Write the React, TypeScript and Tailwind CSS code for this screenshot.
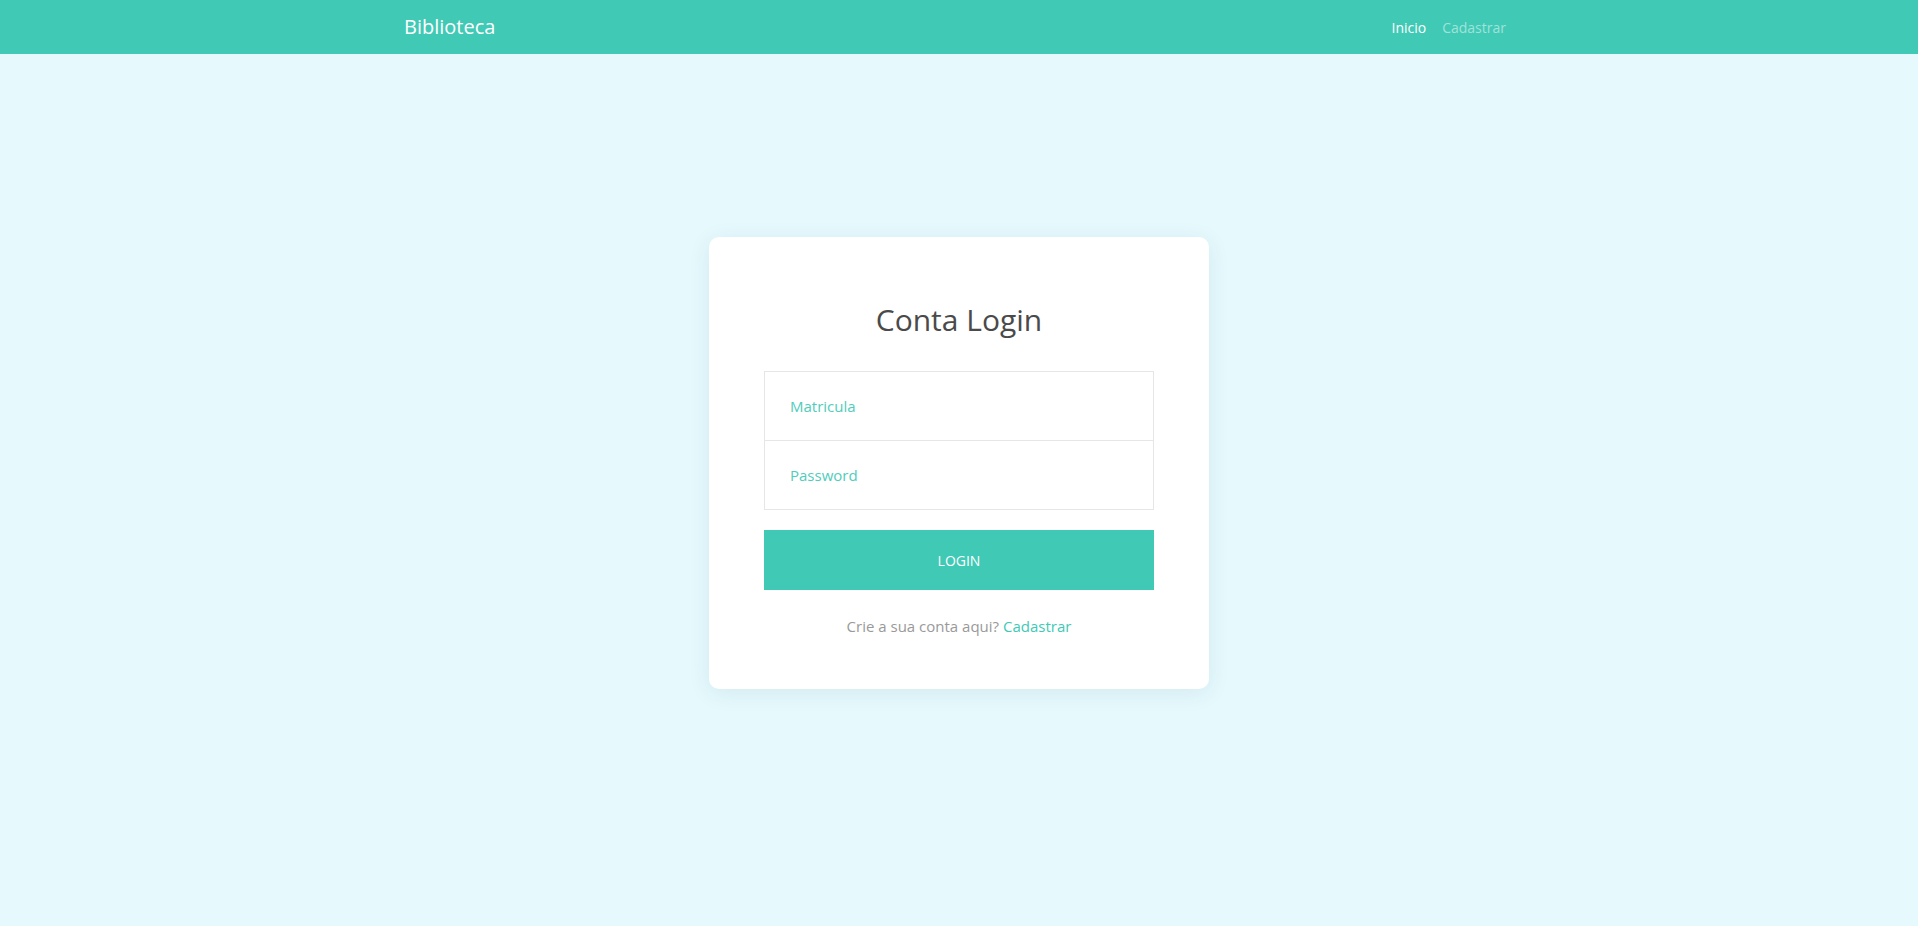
import React from "react";

export default function App() {
  return (
    <div
      className="min-h-[926px] w-full bg-[#e6f9fd]"
      style={{ fontFamily: '"Open Sans", "Noto Sans", sans-serif' }}
    >
      <nav className="h-[54px] bg-[#40c9b5]">
        <div className="mx-auto flex h-full w-[1110px] items-center justify-between">
          <a className="text-[20px] leading-[28px] text-white" href="#">
            Biblioteca
          </a>
          <div className="flex items-center">
            <a className="px-2 text-[14px] leading-[21px] text-white" href="#">
              Inicio
            </a>
            <a className="px-2 text-[14px] leading-[21px] text-white/50" href="#">
              Cadastrar
            </a>
          </div>
        </div>
      </nav>
      <main className="flex justify-center pt-[183px]">
        <div className="w-[500px] rounded-[10px] bg-white px-[55px] pt-[65px] pb-[52px] shadow-[0_4px_22px_rgba(0,90,110,0.09)]">
          <h1 className="text-center text-[30px] leading-[36px] text-[#4a4a4a]">
            Conta Login
          </h1>
          <div className="mt-[33px] border border-[#e6e6e6]">
            <input
              type="text"
              placeholder="Matricula"
              className="block h-[68px] w-full border-b border-[#e6e6e6] px-[25px] text-[15px] text-[#555] outline-none placeholder:text-[#4fcdbb]"
              style={{ boxSizing: "content-box", width: "calc(100% - 50px)" }}
            />
            <input
              type="password"
              placeholder="Password"
              className="block h-[68px] w-full px-[25px] text-[15px] text-[#555] outline-none placeholder:text-[#4fcdbb]"
              style={{ boxSizing: "content-box", width: "calc(100% - 50px)" }}
            />
          </div>
          <button className="mt-[20px] flex h-[60px] w-full items-center justify-center bg-[#40c9b5] text-[14px] font-medium uppercase text-white">
            Login
          </button>
          <p className="mt-[25px] text-center text-[15px] leading-[22px] text-[#999]">
            Crie a sua conta aqui?{" "}
            <a href="#" className="text-[#40c9b5]">
              Cadastrar
            </a>
          </p>
        </div>
      </main>
    </div>
  );
}
